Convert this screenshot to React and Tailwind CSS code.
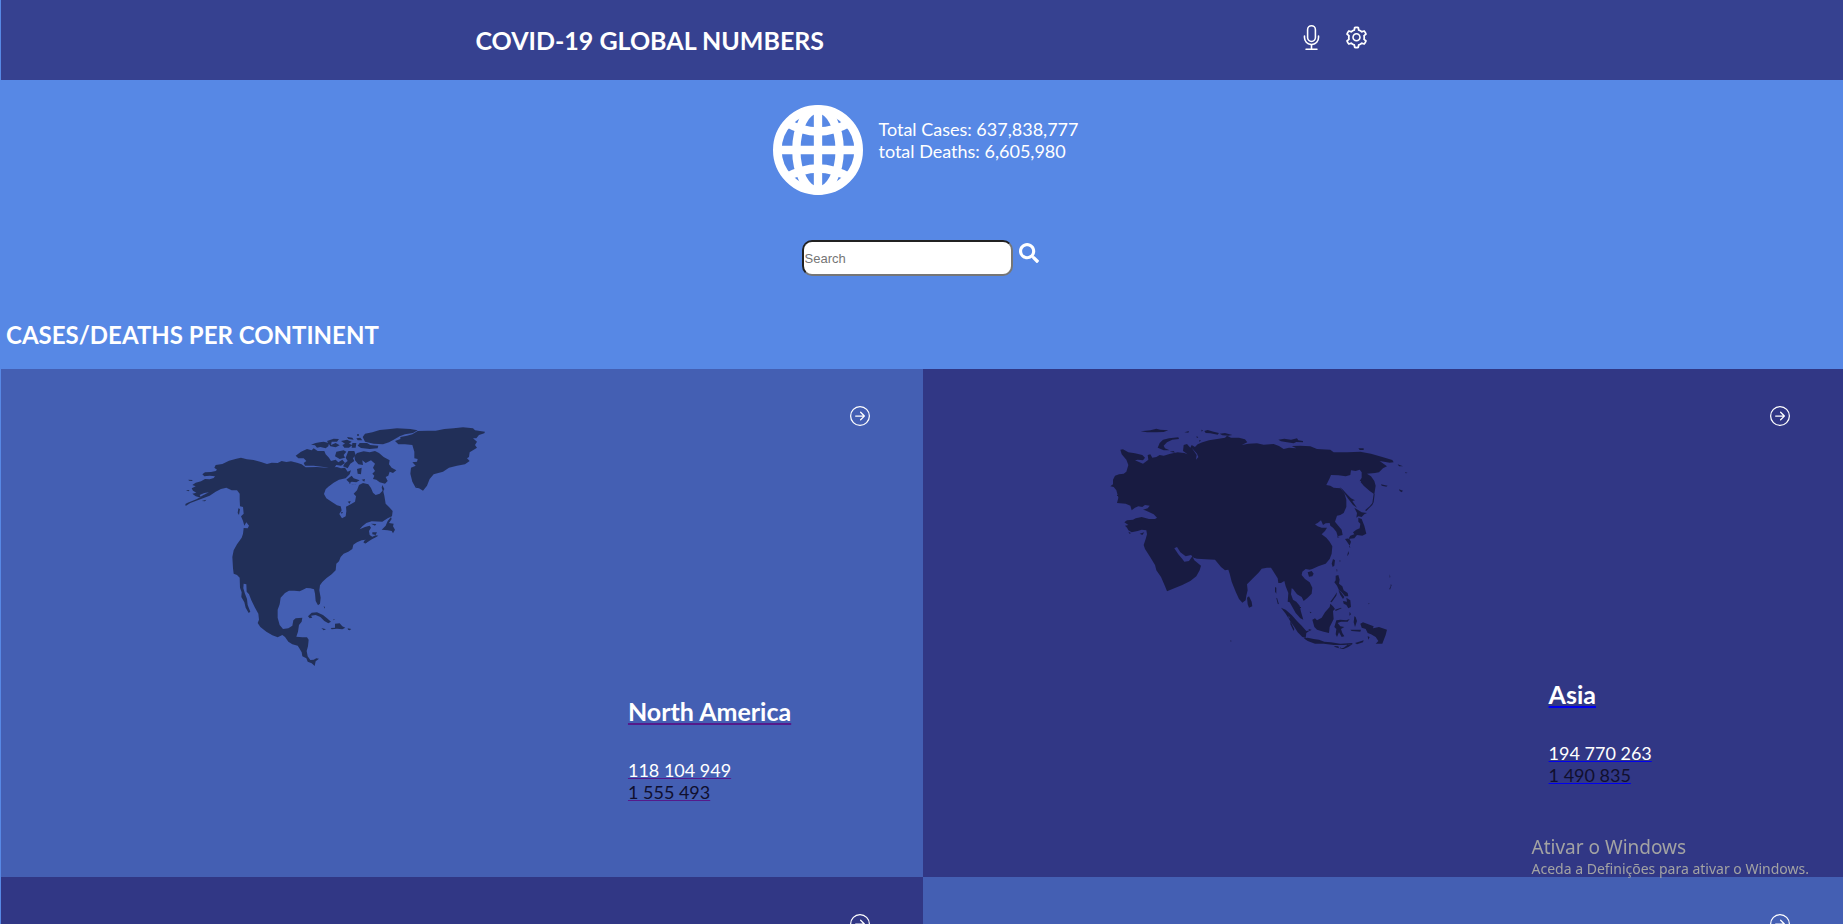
import { BsMic, BsArrowRightCircle } from "react-icons/bs";
import { AiOutlineSetting } from "react-icons/ai";
import { FaSearch } from "react-icons/fa";

function GlobeIcon() {
  return (
    <svg viewBox="69 45 270 270" className="size-[90px]" fill="none" stroke="currentColor" strokeWidth="25" aria-hidden="true">
      <circle cx="204" cy="180" r="122" strokeWidth="26" />
      <ellipse cx="204" cy="180" rx="65" ry="122" />
      <path d="M204 58V302M82 180H326" />
      <path d="M108 97Q204 152 300 97M108 263Q204 208 300 263" />
    </svg>
  );
}

function CoastFilter({ id }) {
  return (
    <filter id={id} x="-5%" y="-5%" width="110%" height="110%">
      <feTurbulence type="fractalNoise" baseFrequency="0.3" numOctaves="3" seed="4" />
      <feDisplacementMap in="SourceGraphic" scale="4" xChannelSelector="R" yChannelSelector="G" />
    </filter>
  );
}

function NorthAmericaMap() {
  return (
    <svg viewBox="44 50 900 720" className="block h-[240px] w-[300px] overflow-visible" fill="black" aria-hidden="true">
      <CoastFilter id="coast-na" />
      <g filter="url(#coast-na)">
        <path d="M45 281L52 277L80 266L98 255L116 246L102 248L88 254L92 262L76 258L66 250L78 247L68 241L64 234L76 228L66 224L76 217L92 213L104 206L118 207L130 203L134 198L118 196L102 198L96 192L104 186L122 185L136 182L140 178L132 172L136 164L156 161L176 151L198 145L212 142L230 147L250 149L272 155L290 161L304 157L322 158L334 152L348 155L362 153L380 157L394 162L406 171L440 170L470 172L500 170L512 174L524 172L532 184L542 180L538 192L526 204L506 208L490 217L474 229L466 237L461 251L468 264L486 276L500 285L511 288L514 300L507 311L515 324L526 318L528 302L527 289L541 282L554 274L557 258L550 250L560 240L566 224L578 218L594 222L602 233L608 247L616 254L628 250L638 240L642 256L646 280L656 290L667 302L665 318L652 324L636 334L604 333L588 338L576 348L568 357L584 350L598 346L602 352L596 362L598 374L606 379L616 375L624 376L612 383L600 386L588 397L579 398L586 388L574 390L560 396L549 403L546 416L534 424L520 430L511 440L506 453L498 460L496 480L484 492L468 504L456 515L449 525L447 540L451 562L449 580L443 585L436 572L434 550L431 537L420 534L408 533L398 538L388 543L372 541L356 541L344 548L331 562L328 582L322 598L322 622L328 644L338 656L354 654L366 646L369 630L376 624L396 622L394 634L386 644L383 664L378 679L396 681L410 681L415 688L413 708L409 722L412 738L420 749L430 748L438 744L446 745L436 753L433 767L424 759L412 754L408 744L396 738L394 726L386 712L382 706L366 702L354 694L344 680L336 674L322 681L306 675L288 664L270 650L262 638L266 628L264 610L254 592L243 570L236 552L229 544L228 522L220 520L219 534L224 550L230 566L232 584L240 604L235 608L226 592L222 576L213 560L214 546L209 532L208 502L200 494L190 490L188 474L186 440L190 420L200 402L214 382L218 370L220 353L232 354L236 346L228 336L222 346L218 332L212 318L220 310L218 290L209 288L208 268L208 250L200 240L184 240L168 232L152 236L136 244L118 256L98 264L82 270L60 278L46 287Z" />
        <path d="M54 208L66 209L66 212L56 211ZM47 239L58 239L54 243ZM204 294L209 296L206 314L202 308ZM94 272L108 268L104 273Z" />
        <path d="M376 136L392 124L410 116L424 120L430 114L442 122L462 122L466 132L476 142L482 152L496 148L504 156L516 148L524 158L512 166L498 164L490 176L460 170L430 166L404 166L400 158L408 152L400 144L384 144Z" />
        <path d="M422 103L436 98L448 96L460 94L476 98L474 108L466 114L450 110L440 112L434 105ZM470 92L490 85L506 86L500 94L484 94L482 104L496 98L508 105L496 111L480 108ZM530 80L546 82L550 88L534 86ZM512 92L530 88L544 94L536 100L546 104L536 112L522 112L516 104L524 100ZM546 98L558 98L556 112L544 112ZM558 84L570 82L576 90L562 90ZM568 98L590 98L600 104L624 106L622 114L598 116L572 113L562 106ZM498 124L520 120L528 124L520 134L524 142L508 146L494 138ZM534 122L552 122L556 134L548 144L552 152L540 160L532 174L518 168L524 158L532 152L526 142Z" />
        <path d="M577 80L584 70L606 66L628 59L652 57L680 54L720 56L742 60L728 68L704 72L688 78L670 88L656 96L638 102L610 100L584 94ZM560 72L566 72L566 76L560 76Z" />
        <path d="M560 128L580 123L598 126L614 122L626 128L640 140L658 150L656 162L664 172L678 180L668 188L658 184L654 196L646 200L652 212L644 220L628 216L618 208L608 206L612 196L606 190L614 182L608 172L614 160L602 150L586 158L576 150L578 164L564 162L554 150L552 138Z" />
        <path d="M528 208L544 196L550 204L568 210L558 216L544 214L536 220L560 224L542 222ZM560 176L574 172L572 192L562 190ZM574 208L584 206L582 214ZM532 274L541 272L538 280ZM636 224L642 236L638 244L634 232ZM512 304L518 306L514 311Z" />
        <path d="M634 358L646 346L652 332L662 320L664 326L656 338L670 340L668 348L674 358L668 369L664 362L652 360ZM602 340L618 341L614 346ZM606 366L620 366L616 374L606 372ZM580 392L600 383L622 376L600 390L584 400Z" />
        <path d="M674 92L690 86L690 80L710 76L726 72L742 62L772 61L796 61L822 56L850 54L878 51L908 54L914 60L944 64L942 69L926 74L918 84L908 84L920 94L914 104L920 112L908 120L898 126L896 140L890 144L898 152L884 162L860 166L836 172L818 184L790 192L778 206L770 226L758 241L746 234L736 232L726 214L720 190L722 172L736 166L726 156L740 154L742 146L732 144L732 124L726 104L704 102L684 102Z" />
        <path d="M413 618L424 607L440 606L458 614L470 624L482 634L474 639L462 632L450 620L436 614L422 616L426 622L418 624ZM453 653L467 657L460 660ZM481 653L494 652L494 640L508 639L516 648L525 652L516 657L500 655L484 657ZM532 654L543 656L538 660L533 658ZM460 588L464 590L463 595ZM489 626L494 628L490 630Z" />
      </g>
    </svg>
  );
}

function AsiaMap() {
  return (
    <svg viewBox="20 50 900 669" className="block h-[223px] w-[300px] overflow-visible" fill="black" fillRule="evenodd" aria-hidden="true">
      <CoastFilter id="coast-asia" />
      <g filter="url(#coast-asia)">
        <path d="M60 118L68 117L84 126L104 129L126 134L134 142L128 150L112 148L104 150L128 160L144 148L142 134L150 132L156 142L168 140L178 134L190 136L210 130L232 126L252 128L262 132L248 122L250 104L260 101L270 112L274 104L284 110L292 102L306 96L326 90L350 86L374 82L380 76L392 82L416 82L434 87L441 96L424 104L444 100L470 99L490 103L520 101L536 107L550 116L566 112L588 114L574 107L600 106L630 108L650 116L690 118L700 126L740 126L780 124L812 130L846 140L876 149L880 156L868 157L838 152L860 168L848 174L836 186L824 188L800 190L812 198L822 212L826 226L822 252L808 242L790 226L778 212L784 202L784 186L778 178L766 182L752 180L750 194L736 198L714 195L692 194L688 204L678 224L690 226L700 232L720 234L732 248L738 268L738 290L730 308L720 314L710 316L704 334L712 344L724 358L727 374L712 378L708 364L698 352L690 346L688 338L676 339L668 344L662 330L652 338L644 342L652 348L664 352L680 352L674 362L664 372L678 382L688 394L696 408L694 430L688 446L676 460L654 468L636 476L628 478L616 476L606 484L604 494L614 506L628 516L636 532L634 550L622 562L610 572L604 560L590 552L578 536L574 534L572 552L578 568L588 574L598 586L602 604L609 628L600 624L586 608L576 590L568 576L562 574L564 548L556 528L552 512L542 518L534 518L532 504L522 488L512 472L500 472L484 475L476 486L458 504L440 522L442 540L438 556L436 570L426 577L416 566L406 544L394 514L388 490L384 478L374 480L362 470L344 448L316 447L290 445L280 442L272 434L256 438L240 426L230 410L222 414L234 432L246 446L252 454L266 452L276 438L282 450L302 466L298 480L288 498L270 512L246 524L222 534L200 543L194 528L182 500L168 480L164 464L148 438L134 416L130 404L136 386L140 372L138 360L124 358L112 362L94 366L84 360L80 352L74 346L84 344L72 336L80 330L98 328L106 324L124 320L146 326L164 326L170 322L160 312L144 304L134 300L128 298L142 294L148 286L134 284L126 290L114 288L104 292L94 300L90 286L76 280L50 278L54 262L48 240L40 230L30 228L38 222L38 208L44 196L56 192L70 190L78 184L84 164L78 148L64 132ZM274 112L290 130L294 140L287 148L289 134Z" />
        <path d="M121 63L150 60L168 55L180 58L204 60L190 65L168 66L140 66ZM172 112L178 98L188 88L206 84L234 81L236 86L216 88L200 96L190 106L194 114L208 120L190 120ZM208 124L220 122L224 127ZM252 66L266 62L264 67ZM303 58L308 60L304 64ZM288 78L294 80L290 84ZM296 90L302 90L298 95ZM312 62L322 59L340 64L356 68L352 73L330 69L316 68ZM358 70L374 68L396 74L384 76L366 75ZM534 88L552 85L572 88L590 84L594 90L608 92L608 96L588 95L580 99L560 96L542 93ZM774 114L790 114L790 119L778 119ZM892 162L908 168L896 168ZM914 185L922 188L916 189ZM842 222L862 226L858 229L844 226ZM896 237L908 241L904 246L898 242Z" />
        <path d="M718 230L728 238L740 252L752 264L764 270L756 272L770 292L758 284L744 266L734 252ZM820 250L823 252L820 276L816 284L806 294L798 302L794 300L808 288L816 278ZM762 292L772 298L784 306L800 308L792 312L784 320L774 318L768 322L770 308ZM774 322L784 326L792 346L798 370L786 376L770 374L762 384L744 386L750 376L762 372L758 366L768 358L778 354L780 340L774 334ZM734 386L746 384L752 394L748 406L740 394ZM710 378L718 380L712 382ZM748 406L750 412L746 410ZM744 422L746 430L740 438ZM716 452L720 450L720 454ZM698 446L704 450L702 466L697 470L694 460ZM622 486L634 482L640 490L636 498L626 499Z" />
        <path d="M440 562L446 558L454 574L456 588L446 592L442 582ZM524 530L528 532L528 550L524 544ZM528 564L530 562L536 582L532 580ZM118 370L132 366L126 374ZM84 364L92 368L88 371Z" />
        <path d="M542 592L556 598L574 614L590 632L604 646L618 662L630 660L618 668L616 683L606 680L592 666L582 650L568 630L556 610ZM564 618L568 620L566 626ZM570 632L582 656L580 662L570 642ZM610 684L622 682L640 686L656 688L672 694L692 696L720 700L756 698L756 702L730 704L700 704L670 700L644 700L622 692ZM764 698L790 690L788 696L770 702ZM700 707L714 708L716 714L706 711ZM730 712L744 702L756 702L744 710L730 716L716 716Z" />
        <path d="M636 628L644 624L650 630L664 622L674 606L688 590L690 580L698 588L704 596L698 602L700 626L696 634L688 650L686 668L670 664L650 658L642 650ZM708 630L720 628L738 630L748 626L742 634L722 634L712 638L720 648L732 650L722 656L726 668L732 678L724 680L716 666L710 680L706 672L708 656L702 650ZM762 618L766 620L770 632L764 650L760 636ZM750 658L782 658L780 664L754 662ZM628 604L634 606L630 609ZM624 656L634 658L628 662Z" />
        <path d="M706 496L714 494L718 508L716 520L726 528L730 540L742 548L744 558L734 558L724 546L716 540L710 526L702 516L706 510ZM714 540L722 546L732 560L728 566L720 554ZM738 562L750 570L752 590L744 594L738 584L730 580L728 572L740 574ZM710 546L708 556L694 576L690 574L702 558ZM704 598L722 592L724 594L706 602ZM748 604L752 612L747 616ZM708 476L711 478L710 486Z" />
        <path d="M780 640L788 636L804 642L820 648L818 654L836 650L860 658L856 674L846 700L826 700L834 692L826 680L812 672L802 668L796 656L784 652ZM802 678L808 680L804 688ZM868 492L870 500L868 502ZM871 522L874 524L869 538L867 535L871 528ZM804 578L808 580L805 582ZM390 690L394 692L391 694Z" />
      </g>
    </svg>
  );
}

function ContinentCard({ name, cases, deaths, map, tone, visited }) {
  const underline = visited ? "underline decoration-[#551a8b]" : "underline decoration-[#0000ee]";
  return (
    <a href="#continent" aria-label={name ?? "Continent details"} className={`relative block ${tone} ${name ? "min-h-[508px]" : "min-h-16"}`}>
      <BsArrowRightCircle className="absolute top-[37px] right-[53px] size-5 text-white" />
      {name && (
        <>
          <div className="pt-[58px] pl-[20%] opacity-50">{map}</div>
          <div className="pt-[29px] pl-[68%] text-[18px] leading-[22px]">
            <h2 className={`text-[25px] leading-[30px] font-bold text-white ${underline}`}>{name}</h2>
            <p className={`mt-[33px] text-white ${underline}`}>{cases}</p>
            <p className={`text-[#100f2e] ${underline}`}>{deaths}</p>
          </div>
        </>
      )}
    </a>
  );
}

export default function App() {
  return (
    <div className="h-screen overflow-hidden bg-[#5788e5] pl-px font-['Lato',sans-serif] text-white">
      <header className="flex h-20 items-center justify-evenly bg-[#364190]">
        <h1 className="text-[25px] leading-[30px] font-bold">COVID-19 GLOBAL NUMBERS</h1>
        <div className="flex gap-5 pb-[6px]">
          <button type="button" aria-label="Voice search"><BsMic className="size-[25px]" /></button>
          <button type="button" aria-label="Settings"><AiOutlineSetting className="size-[25px]" /></button>
        </div>
      </header>

      <section className="flex justify-center gap-[15px] pt-[25px] pl-2 text-[18px] leading-[22px]">
        <GlobeIcon />
        <div className="pt-[13px]">
          <p>Total Cases: 637,838,777</p>
          <p>total Deaths: 6,605,980</p>
        </div>
      </section>

      <form className="mt-[45px] flex justify-center gap-[6px] pr-1">
        <input
          type="search"
          aria-label="Search"
          placeholder="Search"
          className="h-9 w-[211px] rounded-[10px] border-2 border-t-[#212121] border-r-[#767676] border-b-[#767676] border-l-[#212121] bg-white px-px font-['Liberation_Sans',sans-serif] text-[13px] text-black placeholder:text-[#757575]"
        />
        <button type="button" aria-label="Submit search" className="mt-[3px] self-start"><FaSearch className="size-5" /></button>
      </form>

      <h2 className="mt-11 mb-[19px] pl-[5px] text-[24px] leading-[30px] font-bold">CASES/DEATHS PER CONTINENT</h2>

      <main className="grid grid-cols-[922fr_920fr]">
        <ContinentCard name="North America" cases="118 104 949" deaths="1 555 493" map={<NorthAmericaMap />} tone="bg-[#445fb3]" visited />
        <ContinentCard name="Asia" cases="194 770 263" deaths="1 490 835" map={<AsiaMap />} tone="bg-[#313785]" />
        <ContinentCard tone="bg-[#313785]" />
        <ContinentCard tone="bg-[#445fb3]" />
      </main>

      <aside className="pointer-events-none fixed right-[34px] bottom-[45px] font-['Noto_Sans',sans-serif] text-[#a3a3a3]">
        <p className="text-[19px] leading-6">Ativar o Windows</p>
        <p className="text-[14px] leading-5">Aceda a Definições para ativar o Windows.</p>
      </aside>
    </div>
  );
}
